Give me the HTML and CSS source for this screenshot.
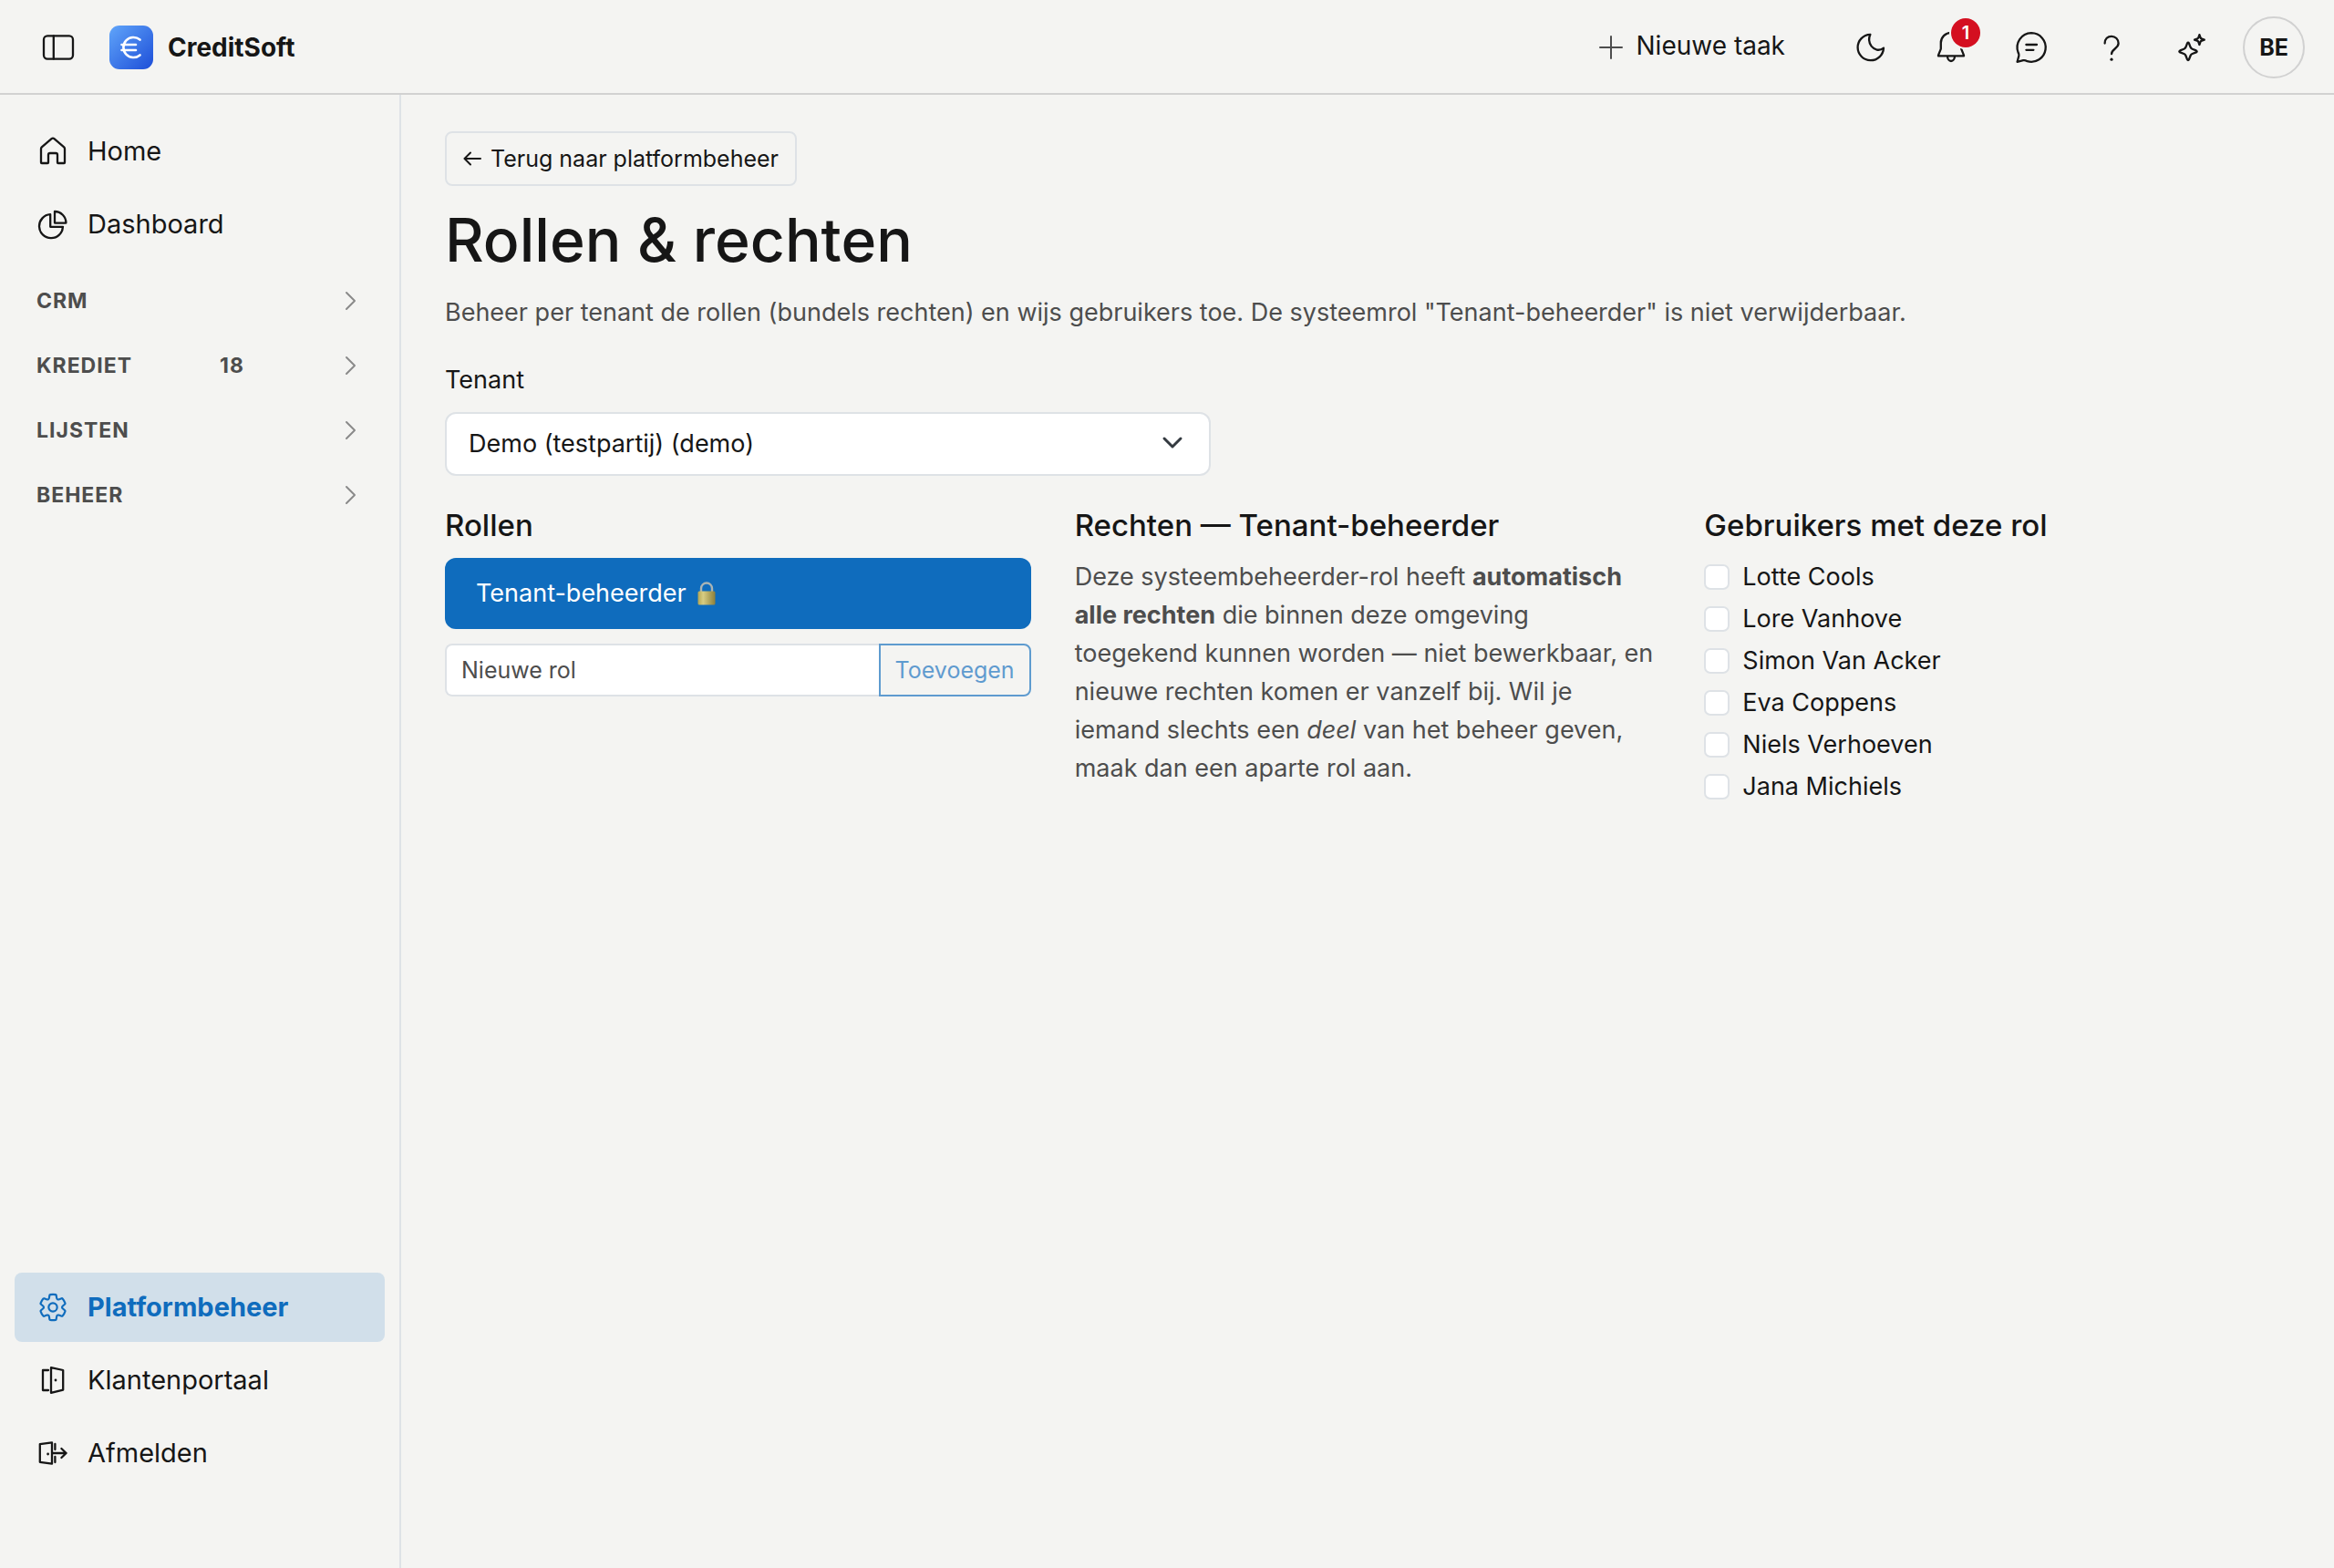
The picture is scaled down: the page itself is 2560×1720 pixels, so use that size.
FILE: index.html
```html
<!DOCTYPE html>
<html lang="nl">
<head>
  <meta charset="UTF-8" />
  <title>Rollen &amp; rechten - CreditSoft</title>
  <meta name="viewport" content="width=device-width, initial-scale=1.0" />
  <link rel="stylesheet" href="styles.css">
</head>
<body>
  <header class="topbar">
    <button class="icon-btn" type="button" aria-label="Menu">
      <svg class="icon" viewBox="0 0 20 20"><rect x="2" y="3.7" width="16" height="12.6" rx="2"/><path d="M7.4 3.7v12.6"/></svg>
    </button>
    <a class="brand" href="#">
      <svg class="logo" viewBox="0 0 48 48">
        <defs>
          <linearGradient id="logoBg" x1="0" y1="0" x2="1" y2="1">
            <stop offset="0" stop-color="#60a5fa"/>
            <stop offset="1" stop-color="#1d4ed8"/>
          </linearGradient>
        </defs>
        <rect width="48" height="48" rx="11" fill="url(#logoBg)"/>
        <path d="M33.5 15.6A11 11 0 1 0 33.5 32.4M13.5 21H29M13.5 27H29" fill="none" stroke="#fff" stroke-width="2.6" stroke-linecap="round"/>
      </svg>
      CreditSoft
    </a>
    <div class="actions">
      <button class="new-task" type="button">
        <svg class="icon plus" viewBox="0 0 20 20"><path d="M10 4v12M4 10h12"/></svg>
        <span>Nieuwe taak</span>
      </button>
      <button class="icon-btn" type="button" aria-label="Donkere modus">
        <svg class="icon" viewBox="0 0 20 20"><path d="M9.7 2.9A7.1 7.1 0 1 0 17 10.3C14.5 12.3 11.8 11.2 10.3 9.3 8.9 7.4 8.7 5 9.7 2.9z"/></svg>
      </button>
      <button class="icon-btn" type="button" aria-label="Meldingen">
        <svg class="icon" viewBox="0 0 20 20"><path d="M10 1.9a5.6 5.6 0 0 0-5.6 5.6v3.3L3 14.3v.4h14v-.4l-1.4-3.5V7.5A5.6 5.6 0 0 0 10 1.9zM8 14.8a2 2.7 0 0 0 4 0"/></svg>
        <span class="badge">1</span>
      </button>
      <button class="icon-btn" type="button" aria-label="Berichten">
        <svg class="icon" viewBox="0 0 20 20"><path d="M10 2.1a7.9 7.9 0 1 1-2.2 15.5c-.9-.5-1.4-.7-2.2-.5l-3.3.8.9-3.4c.2-.6 0-1-.4-1.7A7.9 7.9 0 0 1 10 2.1zM7.2 8.5h5.8M7.2 11.4h4"/></svg>
      </button>
      <button class="icon-btn" type="button" aria-label="Help">
        <svg class="icon" viewBox="0 0 20 20"><path d="M6.3 7.8C6.3 5.4 7.9 3.9 10 3.9s3.8 1.6 3.8 3.9c0 2.8-3.8 3.1-3.8 5.8"/><circle class="dot" cx="10" cy="16.6" r=".8"/></svg>
      </button>
      <button class="icon-btn" type="button" aria-label="Assistent">
        <svg class="icon" viewBox="0 0 20 20"><path d="M7.5 7.8q.5-.9 1 0l.8 2.1q.3.7 1 1l2.1.8q.9.5 0 1l-2.1.8q-.7.3-1 1l-.8 2.1q-.5.9-1 0l-.8-2.1q-.3-.7-1-1l-2.1-.8q-.9-.5 0-1l2.1-.8q.7-.3 1-1zM14.2 3.1l.5 1.4q.2.6.8.8l1.4.5-1.4.5q-.6.2-.8.8l-.5 1.4-.5-1.4q-.2-.6-.8-.8l-1.4-.5 1.4-.5q.6-.2.8-.8z"/></svg>
      </button>
      <button class="avatar" type="button">BE</button>
    </div>
  </header>

  <div class="layout">
    <nav class="sidebar">
      <a class="nav-item" href="#">
        <svg class="icon" viewBox="0 0 20 20"><path d="M9.3 3.1a1.1 1.1 0 0 1 1.4 0l5.4 4.6q.4.4.4.9v7.5q0 .4-.4.4h-3.2q-.4 0-.4-.4v-4.2q0-.9-.9-.9H8.4q-.9 0-.9.9v4.2q0 .4-.4.4H3.9q-.4 0-.4-.4V8.6q0-.5.4-.9z"/></svg>
        Home
      </a>
      <a class="nav-item" href="#">
        <svg class="icon" viewBox="0 0 20 20"><path d="M8.6 4.6A6.5 6.5 0 1 0 15.5 11.4H8.6zM11 3a6.2 6.2 0 0 1 6.2 6.3H11z"/></svg>
        Dashboard
      </a>
      <div class="nav-groups">
        <button class="nav-group" type="button">CRM
          <svg class="icon chevron" viewBox="0 0 20 20"><path d="M8 5.5l4.5 4.5L8 14.5"/></svg>
        </button>
        <button class="nav-group" type="button">KREDIET <span>18</span>
          <svg class="icon chevron" viewBox="0 0 20 20"><path d="M8 5.5l4.5 4.5L8 14.5"/></svg>
        </button>
        <button class="nav-group" type="button">LIJSTEN
          <svg class="icon chevron" viewBox="0 0 20 20"><path d="M8 5.5l4.5 4.5L8 14.5"/></svg>
        </button>
        <button class="nav-group" type="button">BEHEER
          <svg class="icon chevron" viewBox="0 0 20 20"><path d="M8 5.5l4.5 4.5L8 14.5"/></svg>
        </button>
      </div>
      <div class="nav-bottom">
        <a class="nav-item active" href="#">
          <svg class="icon gear" viewBox="-2 -2 24 24"><path d="M1.91 7.38A8.5 8.5 0 0 1 3.7 4.3a.5.5 0 0 1 .54-.13l1.92.68a1 1 0 0 0 1.32-.76l.36-2a.5.5 0 0 1 .4-.4 8.53 8.53 0 0 1 3.55 0c.2.04.35.2.38.4l.37 2a1 1 0 0 0 1.32.76l1.92-.68a.5.5 0 0 1 .54.13 8.5 8.5 0 0 1 1.78 3.08c.06.2 0 .4-.15.54l-1.56 1.32a1 1 0 0 0 0 1.52l1.56 1.32a.5.5 0 0 1 .15.54 8.5 8.5 0 0 1-1.78 3.08.5.5 0 0 1-.54.13l-1.92-.68a1 1 0 0 0-1.32.76l-.37 2a.5.5 0 0 1-.38.4 8.53 8.53 0 0 1-3.56 0 .5.5 0 0 1-.39-.4l-.36-2a1 1 0 0 0-1.32-.76l-1.92.68a.5.5 0 0 1-.54-.13 8.5 8.5 0 0 1-1.78-3.08.5.5 0 0 1 .15-.54l1.56-1.32a1 1 0 0 0 0-1.52L2.06 7.92a.5.5 0 0 1-.15-.54z"/><circle cx="10" cy="10" r="2.8"/></svg>
          Platformbeheer
        </a>
        <a class="nav-item" href="#">
          <svg class="icon" viewBox="0 0 20 20"><path d="M7.5 4.5h-3v11h3M9 3.1l6.6 1.4v10.8L9 16.9z"/><circle class="dot" cx="11.5" cy="10" r=".7"/></svg>
          Klantenportaal
        </a>
        <a class="nav-item" href="#">
          <svg class="icon" viewBox="0 0 20 20"><path d="M9.5 4.2L2.9 5.1v9.8l6.6.9zM11.2 5v3M11.2 12v3M9.5 10h7.8M14.7 7.5l2.6 2.5-2.6 2.5"/><circle class="dot" cx="7.3" cy="10.5" r=".7"/></svg>
          Afmelden
        </a>
      </div>
    </nav>

    <main class="content">
      <a class="back-link" href="#">
        <svg viewBox="0 0 20 16"><path d="M19 8H1.5M8 1.5L1.5 8 8 14.5"/></svg>
        Terug naar platformbeheer
      </a>
      <h1>Rollen &amp; rechten</h1>
      <p class="intro">Beheer per tenant de rollen (bundels rechten) en wijs gebruikers toe. De systeemrol "Tenant-beheerder" is niet verwijderbaar.</p>

      <label class="field-label" for="tenant">Tenant</label>
      <div class="select-wrap">
        <select id="tenant">
          <option>Demo (testpartij) (demo)</option>
        </select>
        <svg class="caret" viewBox="0 0 24 24"><path d="M3 7l9 9 9-9"/></svg>
      </div>

      <div class="columns">
        <section>
          <h2>Rollen</h2>
          <button class="role" type="button">
            Tenant-beheerder
            <svg class="lock" viewBox="0 0 20 26">
              <defs>
                <linearGradient id="lockBody" x1="0" y1="0" x2="1" y2="0">
                  <stop offset="0" stop-color="#b5a652"/>
                  <stop offset=".3" stop-color="#d8cd83"/>
                  <stop offset="1" stop-color="#8d7f3a"/>
                </linearGradient>
              </defs>
              <path d="M4 12V7.5a6 6 0 0 1 12 0V12" fill="none" stroke="#a9b4b5" stroke-width="2.4"/>
              <rect x=".5" y="10.5" width="19" height="15" rx="1.5" fill="url(#lockBody)"/>
            </svg>
          </button>
          <form class="add-role">
            <input type="text" placeholder="Nieuwe rol" aria-label="Nieuwe rol" />
            <button type="button" disabled>Toevoegen</button>
          </form>
        </section>
        <section>
          <h2>Rechten — Tenant-beheerder</h2>
          <p class="description">Deze systeembeheerder-rol heeft <strong>automatisch alle rechten</strong> die binnen deze omgeving toegekend kunnen worden — niet bewerkbaar, en nieuwe rechten komen er vanzelf bij. Wil je iemand slechts een <em>deel</em> van het beheer geven, maak dan een aparte rol aan.</p>
        </section>
        <section>
          <h2>Gebruikers met deze rol</h2>
          <div class="users">
            <label><input type="checkbox" /> Lotte Cools</label>
            <label><input type="checkbox" /> Lore Vanhove</label>
            <label><input type="checkbox" /> Simon Van Acker</label>
            <label><input type="checkbox" /> Eva Coppens</label>
            <label><input type="checkbox" /> Niels Verhoeven</label>
            <label><input type="checkbox" /> Jana Michiels</label>
          </div>
        </section>
      </div>
    </main>
  </div>
</body>
</html>
```
FILE: styles.css
```css
:root {
  --bg: #f4f4f2;
  --text: #161616;
  --muted: #4d4d4d;
  --border: #dee2e6;
  --primary: #0f6cbd;
}
* {
  box-sizing: border-box;
}
body {
  margin: 0;
  min-height: 100vh;
  display: flex;
  flex-direction: column;
  font-family: Inter, sans-serif;
  font-size: 27px;
  line-height: 42px;
  background: var(--bg);
  color: var(--text);
}
a {
  color: inherit;
  text-decoration: none;
}
button,
input,
select {
  font: inherit;
  color: inherit;
}
button {
  background: none;
  border: none;
  padding: 0;
  cursor: pointer;
}
h1,
h2,
p {
  margin: 0;
}
.icon {
  width: 40px;
  height: 40px;
  flex: none;
  fill: none;
  stroke: currentColor;
  stroke-width: 1.15;
  stroke-linecap: round;
  stroke-linejoin: round;
}
.icon .dot {
  fill: currentColor;
  stroke: none;
}

/* header */
.topbar {
  display: flex;
  align-items: center;
  height: 104px;
  padding: 2px 32px 0 28px;
  border-bottom: 2px solid #d1d1d1;
  font-size: 28px;
}
.icon-btn {
  position: relative;
  width: 72px;
  height: 72px;
  display: flex;
  align-items: center;
  justify-content: center;
}
.brand {
  display: flex;
  align-items: center;
  gap: 16px;
  margin-left: 20px;
  font-weight: 700;
}
.logo {
  width: 48px;
  height: 48px;
}
.actions {
  display: flex;
  align-items: center;
  gap: 16px;
  margin-left: auto;
}
.new-task {
  display: flex;
  align-items: center;
  gap: 8px;
  margin-right: 42px;
}
.new-task span {
  padding-bottom: 4px;
}
.plus {
  color: var(--muted);
  stroke-width: 1;
}
.badge {
  position: absolute;
  top: 4px;
  right: 4px;
  width: 32px;
  height: 32px;
  border-radius: 50%;
  background: #d40f20;
  box-shadow: 0 0 0 2px var(--bg);
  color: #fff;
  font-size: 20px;
  font-weight: 600;
  line-height: 32px;
  text-align: center;
}
.avatar {
  width: 68px;
  height: 68px;
  margin-left: 4px;
  border: 2px solid #d1d1d1;
  border-radius: 50%;
  font-size: 25px;
  font-weight: 700;
}

/* sidebar */
.layout {
  flex: 1;
  display: flex;
}
.sidebar {
  width: 440px;
  flex: none;
  display: flex;
  flex-direction: column;
  gap: 4px;
  padding: 24px 16px 88px;
  border-right: 2px solid var(--border);
}
.nav-item {
  display: flex;
  align-items: center;
  gap: 18px;
  height: 76px;
  padding: 0 22px;
  border-radius: 8px;
  font-size: 29px;
}
.nav-item.active {
  background: #d1dfea;
  color: var(--primary);
  font-weight: 700;
}
.gear {
  stroke-width: 1.3;
}
.nav-groups {
  display: flex;
  flex-direction: column;
  padding-top: 6px;
}
.nav-group {
  display: flex;
  align-items: center;
  justify-content: space-between;
  height: 71px;
  padding: 0 18px 0 24px;
  color: var(--muted);
  font-size: 23px;
  font-weight: 700;
  letter-spacing: 1px;
}
.chevron {
  color: #8a8a8a;
  stroke-width: 1;
}
.nav-bottom {
  display: flex;
  flex-direction: column;
  gap: 4px;
  margin-top: auto;
}

/* content */
.content {
  flex: 1;
  display: flex;
  flex-direction: column;
  align-items: flex-start;
  padding: 40px 48px;
}
.back-link {
  display: flex;
  align-items: center;
  gap: 10px;
  height: 60px;
  padding: 0 18px;
  border: 2px solid var(--border);
  border-radius: 8px;
  font-size: 25px;
}
.back-link svg {
  width: 20px;
  height: 16px;
  fill: none;
  stroke: currentColor;
  stroke-width: 2;
  stroke-linecap: round;
  stroke-linejoin: round;
}
h1 {
  margin-top: 18px;
  font-size: 66px;
  font-weight: 500;
  line-height: 82px;
}
.intro {
  margin-top: 18px;
  color: var(--muted);
}
.field-label {
  margin-top: 32px;
}
.select-wrap {
  position: relative;
  width: 100%;
  max-width: 840px;
  margin-top: 14px;
}
.select-wrap select {
  display: block;
  width: 100%;
  height: 70px;
  padding: 0 72px 0 24px;
  appearance: none;
  background: #fff;
  border: 2px solid var(--border);
  border-radius: 12px;
}
.caret {
  position: absolute;
  right: 30px;
  top: 22px;
  width: 24px;
  height: 24px;
  fill: none;
  stroke: #343a40;
  stroke-width: 3;
  stroke-linecap: round;
  stroke-linejoin: round;
  pointer-events: none;
}
.columns {
  width: 100%;
  display: grid;
  grid-template-columns: repeat(3, 1fr);
  gap: 48px;
  margin-top: 32px;
}
h2 {
  margin-bottom: 14px;
  font-size: 33px;
  font-weight: 500;
  line-height: 44px;
}
.role {
  width: 100%;
  height: 78px;
  display: flex;
  align-items: center;
  gap: 12px;
  padding: 0 34px;
  border-radius: 12px;
  background: var(--primary);
  color: #fff;
}
.lock {
  width: 20px;
  height: 26px;
}
.add-role {
  display: flex;
  height: 58px;
  margin-top: 16px;
  font-size: 25px;
}
.add-role input {
  flex: 1;
  min-width: 0;
  padding: 0 16px;
  background: #fff;
  border: 2px solid var(--border);
  border-right: none;
  border-radius: 8px 0 0 8px;
}
.add-role input::placeholder {
  color: var(--muted);
  opacity: 1;
}
.add-role button {
  padding: 0 16px;
  border: 2px solid var(--primary);
  border-radius: 0 8px 8px 0;
  color: var(--primary);
  opacity: 0.65;
}
.description {
  padding-right: 4px;
  color: var(--muted);
}
.description strong {
  font-weight: 700;
}
.users {
  display: flex;
  flex-direction: column;
  align-items: flex-start;
  gap: 4px;
}
.users label {
  display: flex;
  align-items: center;
  gap: 14px;
}
.users input {
  appearance: none;
  width: 28px;
  height: 28px;
  margin: 0;
  background: #fff;
  border: 2px solid var(--border);
  border-radius: 7px;
}
```
